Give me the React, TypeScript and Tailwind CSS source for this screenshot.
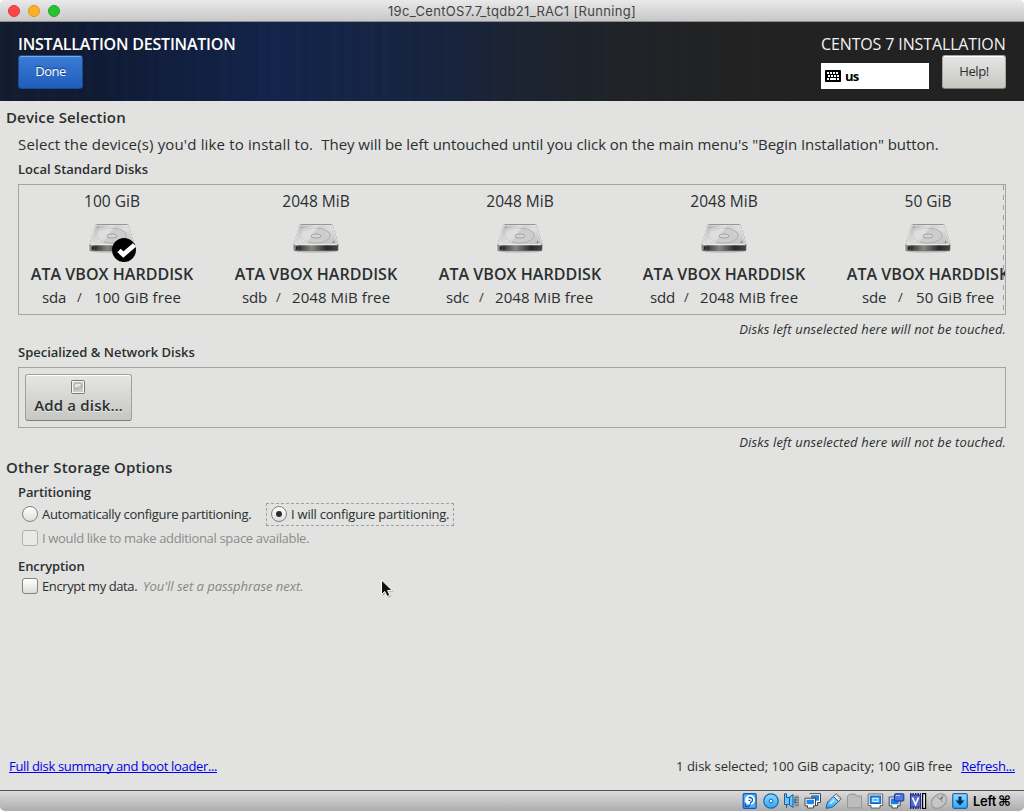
import type { ReactNode } from "react";

type Disk = { size: string; name: string; free: string; cols: string; checked?: boolean };

const disks: Disk[] = [
  { size: "100 GiB", name: "sda", free: "100 GiB free", cols: "pl-[23px] grid-cols-[35px_17px_auto]", checked: true },
  { size: "2048 MiB", name: "sdb", free: "2048 MiB free", cols: "pl-[19px] grid-cols-[34px_16px_auto]" },
  { size: "2048 MiB", name: "sdc", free: "2048 MiB free", cols: "pl-[19px] grid-cols-[33px_16px_auto]" },
  { size: "2048 MiB", name: "sdd", free: "2048 MiB free", cols: "pl-[19px] grid-cols-[34px_16px_auto]" },
  { size: "50 GiB", name: "sde", free: "50 GiB free", cols: "pl-[27px] grid-cols-[36px_18px_auto]" },
];

function DiskGradients() {
  return (
    <svg width="0" height="0" className="absolute" aria-hidden="true">
      <defs>
        <linearGradient id="plate" x1="0" y1="0" x2="1" y2="1">
          <stop offset="0" stopColor="#b4b4b4" />
          <stop offset="0.5" stopColor="#dedede" />
          <stop offset="1" stopColor="#bdbdbd" />
        </linearGradient>
        <linearGradient id="front" x1="0" y1="0" x2="1" y2="0">
          <stop offset="0" stopColor="#8c8c8c" />
          <stop offset="0.12" stopColor="#3a3a38" />
          <stop offset="0.4" stopColor="#858784" />
          <stop offset="0.75" stopColor="#252a28" />
          <stop offset="1" stopColor="#454745" />
        </linearGradient>
        <linearGradient id="blue" x1="0" y1="0" x2="0" y2="1">
          <stop offset="0" stopColor="#8fdcff" />
          <stop offset="1" stopColor="#2ba6f2" />
        </linearGradient>
      </defs>
    </svg>
  );
}

function HardDisk({ checked }: { checked?: boolean }) {
  return (
    <svg width="48" height="40" viewBox="0 0 48 40" className="block overflow-visible">
      <ellipse cx="24" cy="28" rx="22" ry="1.6" fill="#000" opacity="0.2" />
      <path d="M8.600 1.500h30.600q1.200 0 1.700 1.200l5 16.500q.5 1.200.5 2.600v4.700q0 1.500-1.500 1.500H3Q1.600 28 1.600 26.500v-4.700q0-1.300.5-2.600L7 2.700Q7.500 1.500 8.600 1.500Z" fill="#777976" />
      <path d="M8.800 2h30q1.200 0 1.600 1.100l5.100 17q.3 1.600-1.200 1.600H3.600q-1.500 0-1.200-1.500L7.300 3.100Q7.700 2 8.800 2Z" fill="url(#plate)" stroke="#f2f2f2" strokeWidth="0.8" />
      <path d="M8.600 1.500h30.800" stroke="#888" strokeWidth="0.800" />
      <path d="M2.200 22h43.600v4.300q0 1.200-1.300 1.200h-41q-1.300 0-1.300-1.200Z" fill="url(#front)" />
      <path d="M3 21.800h42" stroke="#eee" strokeWidth="0.900" />
      <path d="M4 23.500h2v3H4ZM7.500 23.500h1v3h-1Z" fill="#222" />
      <ellipse cx="23.500" cy="12.500" rx="14.800" ry="7.600" fill="#cdcdcc" stroke="#a0a09f" strokeWidth="0.700" />
      <path d="M10 7.500q8-5 17-5l-12 17q-8-3-7-8Z" fill="#fff" opacity="0.35" />
      <ellipse cx="24" cy="13" rx="5" ry="2" fill="#d6d6d6" stroke="#8c8c8c" strokeWidth="0.700" />
      <circle cx="41.500" cy="19" r="0.800" fill="#666" />
      <circle cx="10" cy="4.500" r="0.600" fill="#777" />
      {checked && (
        <g>
          <circle cx="36" cy="27" r="12" fill="#000" />
          <path d="M31 27.500l4.300 4L46.500 22" fill="none" stroke="#fff" strokeWidth="4.800" />
        </g>
      )}
    </svg>
  );
}

function DiskCard({ disk }: { disk: Disk }) {
  return (
    <div className="w-[186px] flex-none pt-[6px]">
      <div className="h-5 text-center text-[15.5px] leading-5">{disk.size}</div>
      <div className="flex h-[53px] justify-center pt-[12px]">
        <HardDisk checked={disk.checked} />
      </div>
      <div className="h-5 text-center text-[16px] leading-5 font-semibold tracking-[0.04px]">ATA VBOX HARDDISK</div>
      <div className={`mt-[3px] grid h-5 text-[15px] leading-5 ${disk.cols}`}>
        <span className="tracking-[-0.2px]">{disk.name}</span>
        <span className="text-[13px]">/</span>
        <span className="tracking-[0.08px]">{disk.free}</span>
      </div>
    </div>
  );
}

function Untouched() {
  return (
    <div className="mt-[5px] h-[18px] text-right text-[13px] leading-[18px] tracking-[0.149px] italic">
      Disks left unselected here will not be touched.
    </div>
  );
}

function Radio({ on }: { on?: boolean }) {
  return (
    <span className="flex size-4 flex-none items-center justify-center rounded-full border border-[#7f807d] bg-linear-to-b from-white to-[#dededc]">
      {on && <span className="size-[6px] rounded-full bg-[#2a2e30]" />}
    </span>
  );
}

function CheckBox({ disabled }: { disabled?: boolean }) {
  return (
    <span
      className={
        disabled
          ? "size-4 flex-none rounded-[3px] border border-[#b0b0ae] bg-[#e9e9e7]"
          : "size-4 flex-none rounded-[3px] border border-[#82837f] bg-linear-to-b from-white to-[#dcdcda]"
      }
    />
  );
}

function Icon({ children }: { children: ReactNode }) {
  return (
    <svg width="16" height="16" viewBox="0 0 16 16" className="block flex-none overflow-visible">
      {children}
    </svg>
  );
}

function StatusIcons() {
  return (
    <div className="flex items-center gap-[5px]">
      <Icon>
        <rect x="2.200" y="0.700" width="13" height="14.600" rx="1" fill="#4bb4fa" stroke="#1756b8" strokeWidth="1.200" />
        <circle cx="9" cy="7" r="4.900" fill="#fff" />
        <path d="M7.500 4.500h1.500a2.500 2.500 0 1 1 0 5M7.500 7.300h2M4.200 10v3.500h3.500l2-3" fill="none" stroke="#1756b8" strokeWidth="1.300" />
      </Icon>
      <Icon>
        <circle cx="9" cy="8" r="7.200" fill="url(#blue)" stroke="#1463b5" strokeWidth="1.200" />
        <circle cx="9" cy="8" r="1.800" fill="#fff" stroke="#1463b5" />
      </Icon>
      <Icon>
        <path d="M11 2.500h5v12h-5z" fill="#a5a5a5" />
        <path d="M12 4.500h4M12 7h4M12 9.500h4M12 12h4" stroke="#6d6d6d" />
        <path d="M1.500.8h2v3.700H6l4-3v13l-4-3H3.500V15" fill="#5cc6ff" stroke="#1759a8" />
        <path d="M1.500.8v10.700h2M6.500 4.500v7" fill="none" stroke="#1759a8" />
        <path d="M12 5.500v5" stroke="#1759a8" strokeWidth="1.200" />
      </Icon>
      <Icon>
        <path d="M5.500.7h11v8.800h-3v3H11" fill="#fff" stroke="#444" />
        <path d="M7 2.200h8v5.500H7z" fill="#1b86e8" />
        <path d="M1 5.200h10.500v7.600H9.500V15H3.500v-2.200H1z" fill="#fff" stroke="#444" />
        <path d="M2.500 6.700h7.500v4.500h-7.500z" fill="#1b86e8" />
      </Icon>
      <Icon>
        <path d="M11.200.8 16.200 5.500l-2.500 3L8.200 3.500Z" fill="#f2f2f2" stroke="#555" />
        <path d="M11.500 3.500h.8M13.500 5.300h.8" stroke="#555" />
        <path d="m8.200 3.500 5.300 5-5 5Q6.500 14.800 1.200 15.300q.3-4.500 1.500-6.300Z" fill="url(#blue)" stroke="#1756a8" />
        <path d="m5 11 4.500-4.500" stroke="#d9f3ff" strokeWidth="1.300" />
      </Icon>
      <Icon>
        <path d="M1.500 3 4 1.200h5.500L10.500 3h5v11.800h-14Z" fill="#bdbdbd" stroke="#969696" />
      </Icon>
      <Icon>
        <path d="M1.200 1h14.500v11.500h-2.700V15H4v-2.500H1.200Z" fill="#fff" stroke="#555" strokeWidth="0.900" />
        <rect x="3.200" y="3" width="10.500" height="7.500" fill="#218fee" stroke="#0b5fbd" />
        <rect x="5.800" y="5.200" width="5.300" height="3.200" fill="#4fb2f8" stroke="#fff" strokeWidth="0.900" />
      </Icon>
      <Icon>
        <path d="M1.200 4h11v8.800H9.500V15H4v-2.200H1.200z" fill="#fff" stroke="#444" />
        <path d="M2.700 5.500h8v5.800h-8z" fill="#1784e8" />
        <rect x="6.500" y="0.800" width="9.300" height="7.200" rx="0.800" fill="#5578df" stroke="#1c2f91" />
        <path d="M8 2.500h4" stroke="#b8caff" />
      </Icon>
      <svg width="17" height="16" viewBox="0 0 17 16" className="block flex-none overflow-visible">
        <path d="M1 1h11M1 15h11" stroke="#202a80" strokeWidth="2" strokeDasharray="1.500 1" />
        <rect x="1.500" y="2" width="10" height="12" fill="#5169d0" stroke="#25318b" />
        <path d="m3.500 4.500 3 7 3-7" fill="none" stroke="#fff" strokeWidth="1.700" />
        <rect x="13.600" y="0.600" width="3" height="14.800" fill="#e8e8e8" stroke="#000" strokeWidth="1.200" />
      </svg>
      <Icon>
        <ellipse cx="8" cy="8" rx="8.500" ry="6.300" transform="rotate(-42 8 8)" fill="#c6c6c6" stroke="#939393" />
        <path d="m6 3.500 6 5.500M9 6.500l3.500-4.500" stroke="#909090" fill="none" />
        <path d="m9.500 6.500 2-2.500" stroke="#777" strokeWidth="2" />
      </Icon>
      <Icon>
        <rect x="0.700" y="0.700" width="14.600" height="14.600" rx="1.500" fill="url(#blue)" stroke="#2362a8" strokeWidth="1.200" />
        <path d="M6.500 3.500h3v4h3L8 12.500 3.500 7.500h3Z" fill="#0b2f63" />
      </Icon>
    </div>
  );
}

export default function App() {
  return (
    <div className="h-[811px] w-[1024px] overflow-hidden bg-white">
      <div className="relative flex h-full flex-col overflow-hidden rounded-[5px] bg-[#e2e2e0] font-['Open_Sans','Noto_Sans',sans-serif] whitespace-nowrap text-[#2a2f31]">
        <DiskGradients />

        <div className="grid h-[22px] flex-none grid-cols-[1fr_auto_1fr] items-center border-b border-[#8f8f8f] bg-linear-to-b from-[#e9e9e9] to-[#c8c8c8] px-2">
          <div className="flex gap-2">
            <span className="size-3 rounded-full border border-[#e0383c] bg-[#fc4648]" />
            <span className="size-3 rounded-full border border-[#dc9424] bg-[#fdb024]" />
            <span className="size-3 rounded-full border border-[#1fa62b] bg-[#28c231]" />
          </div>
          <div className="font-['Inter',sans-serif] text-[13px] leading-5 tracking-[0.33px] text-[#434343]">19c_CentOS7.7_tqdb21_RAC1 [Running]</div>
          <div />
        </div>

        <header className="flex h-[79px] flex-none justify-between bg-[linear-gradient(90deg,rgba(34,34,34,0)_450px,#222222_800px),repeating-linear-gradient(90deg,rgba(80,110,190,0.03)_0px,rgba(0,0,0,0.03)_9px,rgba(60,90,170,0.03)_14px,rgba(0,0,0,0.02)_23px,rgba(80,110,190,0)_37px),linear-gradient(90deg,#131c2e_0px,#101a33_90px,#111f40_190px,#13234a_270px,#152546_350px,#18233b_470px,#1b2431_560px,#1e222a_680px,#222222_800px)] px-[18px] pt-3">
          <div>
            <div className="h-[21px] text-[16px] leading-5 font-semibold tracking-[-0.21px] text-white">INSTALLATION DESTINATION</div>
            <button className="block h-[34px] w-[65px] rounded-[3px] border border-[#1c4a92] bg-linear-to-b from-[#3a7cd6] to-[#215dbb] text-[13px] leading-[30px] tracking-[-0.5px] text-white shadow-[inset_0_1px_0_#7aa9e8] [text-shadow:0_-1px_1px_#123a78]">
              <span className="block h-8 leading-[30px]">Done</span>
            </button>
          </div>
          <div>
            <div className="h-[21px] text-[16px] leading-5 tracking-[-0.13px] text-[#f2f2f2]">CENTOS 7 INSTALLATION</div>
            <div className="flex items-end gap-[13px]">
              <div className="flex h-[26px] w-[108px] items-center gap-1 bg-white pl-1 text-black">
                <svg width="16" height="12" viewBox="0 0 16 12" className="block">
                  <rect width="16" height="12" rx="0.800" fill="#000" />
                  <path d="M2 3h12" stroke="#fff" strokeWidth="2" strokeDasharray="2 1" />
                  <path d="M3 6h11" stroke="#fff" strokeWidth="2" strokeDasharray="2 1" />
                  <path d="M2 9h2M5 9h6M12 9h2" stroke="#fff" strokeWidth="2" />
                </svg>
                <span className="pb-px text-[13px] leading-[18px] font-bold tracking-[-0.8px]">us</span>
              </div>
              <button className="h-[34px] w-16 rounded-[3px] border border-[#a5a5a2] border-b-[#7e7e7a] bg-linear-to-b from-[#e6e6e4] to-[#c6c6c3] text-[13px] tracking-[-0.4px] text-[#2a2f31] shadow-[inset_0_1px_0_#fff]">
                <span className="block h-8 leading-[30px]">Help!</span>
              </button>
            </div>
          </div>
        </header>

        <main className="flex-1 pr-[18px]">
          <h1 className="ml-[6px] pt-[6px] text-[15px] leading-5 font-semibold tracking-[0.125px]">Device Selection</h1>
          <section className="ml-[18px]">
            <p className="mt-[7px] text-[15px] leading-5 tracking-[-0.045px]">
              <span className="tracking-[0.15px]">{"Select the device(s) you'd like to install to.\u00a0 "}</span>
              {"They will be left untouched until you click on the main menu's \"Begin Installation\" button."}
            </p>
            <h2 className="mt-[6px] text-[13px] leading-[18px] font-semibold">Local Standard Disks</h2>
            <div className="relative mt-[6px] flex h-[131px] gap-[18px] overflow-hidden border border-[#a4a4a2]">
              {disks.map((disk) => (
                <DiskCard key={disk.name} disk={disk} />
              ))}
              <div className="absolute inset-y-0 right-[1px] w-px bg-[repeating-linear-gradient(180deg,#a0a09e_0px,#a0a09e_5px,transparent_5px,transparent_10px)]" />
            </div>
            <Untouched />
            <h2 className="mt-[5px] text-[13px] leading-[18px] font-semibold">Specialized &amp; Network Disks</h2>
            <div className="mt-[6px] h-[61px] border border-[#a4a4a2] p-[6px]">
              <button className="flex h-[47px] w-[107px] flex-col items-center rounded-[3px] border border-[#a0a09e] border-b-[#7e7e7a] bg-linear-to-b from-[#e6e6e4] to-[#c6c6c3] pt-[5px] shadow-[inset_0_1px_0_#fff]">
                <svg width="14" height="14" viewBox="0 0 14 14" className="mr-px block flex-none">
                  <rect x="0.500" y="0.500" width="13" height="13" rx="1" fill="#f5f5f5" stroke="#777975" />
                  <rect x="2" y="2" width="10" height="10" fill="#cbcbc9" />
                  <ellipse cx="7" cy="6" rx="4" ry="3" fill="#e8e8e8" stroke="#999" strokeWidth="0.800" />
                  <path d="M3 10q2-3 8-4" fill="none" stroke="#999" strokeWidth="0.800" />
                </svg>
                <span className="mt-px text-[15px] leading-5 font-semibold tracking-[0.182px] [text-shadow:0_1px_0_#eee]">Add a disk…</span>
              </button>
            </div>
            <Untouched />
          </section>

          <h1 className="mt-[6px] ml-[6px] text-[15px] leading-5 font-semibold tracking-[0.17px]">Other Storage Options</h1>
          <section className="ml-[18px] text-[13px] leading-[18px]">
            <h2 className="mt-[6px] font-semibold tracking-[-0.083px]">Partitioning</h2>
            <div className="mt-[2px] flex h-[23px] items-center pl-1">
              <label className="flex h-[23px] w-[244px] items-center gap-1 pb-[2px] tracking-[-0.297px]">
                <Radio />
                Automatically configure partitioning.
              </label>
              <label className="flex h-[23px] w-[188px] items-center gap-1 border border-dashed border-[#a0a09e] pb-[2px] pl-1 tracking-[-0.22px]">
                <Radio on />
                I will configure partitioning.
              </label>
            </div>
            <label className="mt-[3px] flex items-center gap-1 pl-1 tracking-[-0.333px] text-[#8b8c8b]">
              <CheckBox disabled />
              I would like to make additional space available.
            </label>
            <h2 className="mt-[10px] font-semibold tracking-[-0.1px]">Encryption</h2>
            <label className="mt-[2px] flex items-center gap-1 pl-1">
              <CheckBox />
              <span className="w-[97px] tracking-[-0.4px]">Encrypt my data.</span>
              <span className="tracking-[-0.034px] text-[#868783] italic">You'll set a passphrase next.</span>
            </label>
          </section>
        </main>

        <footer className="flex h-[33px] flex-none justify-between pr-[9px] pl-[9px] text-[13px] leading-[18px]">
          <a className="h-4 border-b border-[#0000ee] tracking-[-0.333px] text-[#0000ee]">Full disk summary and boot loader...</a>
          <div className="flex gap-[9px]">
            <span>1 disk selected; 100 GiB capacity; 100 GiB free</span>
            <a className="h-4 border-b border-[#0000ee] tracking-[-0.3px] text-[#0000ee]">Refresh...</a>
          </div>
        </footer>

        <div className="flex h-[21px] flex-none items-center justify-end border-t border-[#555] bg-linear-to-b from-[#dcdcdc] to-[#adadad] pr-3">
          <StatusIcons />
          <div className="ml-[5px] flex w-[39px] items-center gap-[2px] text-black">
            <span className="font-['Inter',sans-serif] text-[13px] leading-5 font-semibold tracking-[-0.3px]">Left</span>
            <span className="font-['DejaVu_Sans',sans-serif] text-[14px] leading-5 font-bold">⌘</span>
          </div>
        </div>

        <svg width="15" height="20" viewBox="0 0 15 20" className="absolute top-[579px] left-[380px]">
          <path d="M2.500 2v15l3.500-3.200 2.300 5 2.800-1.200-2.200-4.800h4.800Z" fill="#000" opacity="0.25" />
          <path d="M1.500 1v14.500l3.300-3 2.300 5 2.700-1.200-2.200-4.800h4.600Z" fill="#111" stroke="#fff" strokeWidth="1" />
        </svg>
      </div>
    </div>
  );
}
